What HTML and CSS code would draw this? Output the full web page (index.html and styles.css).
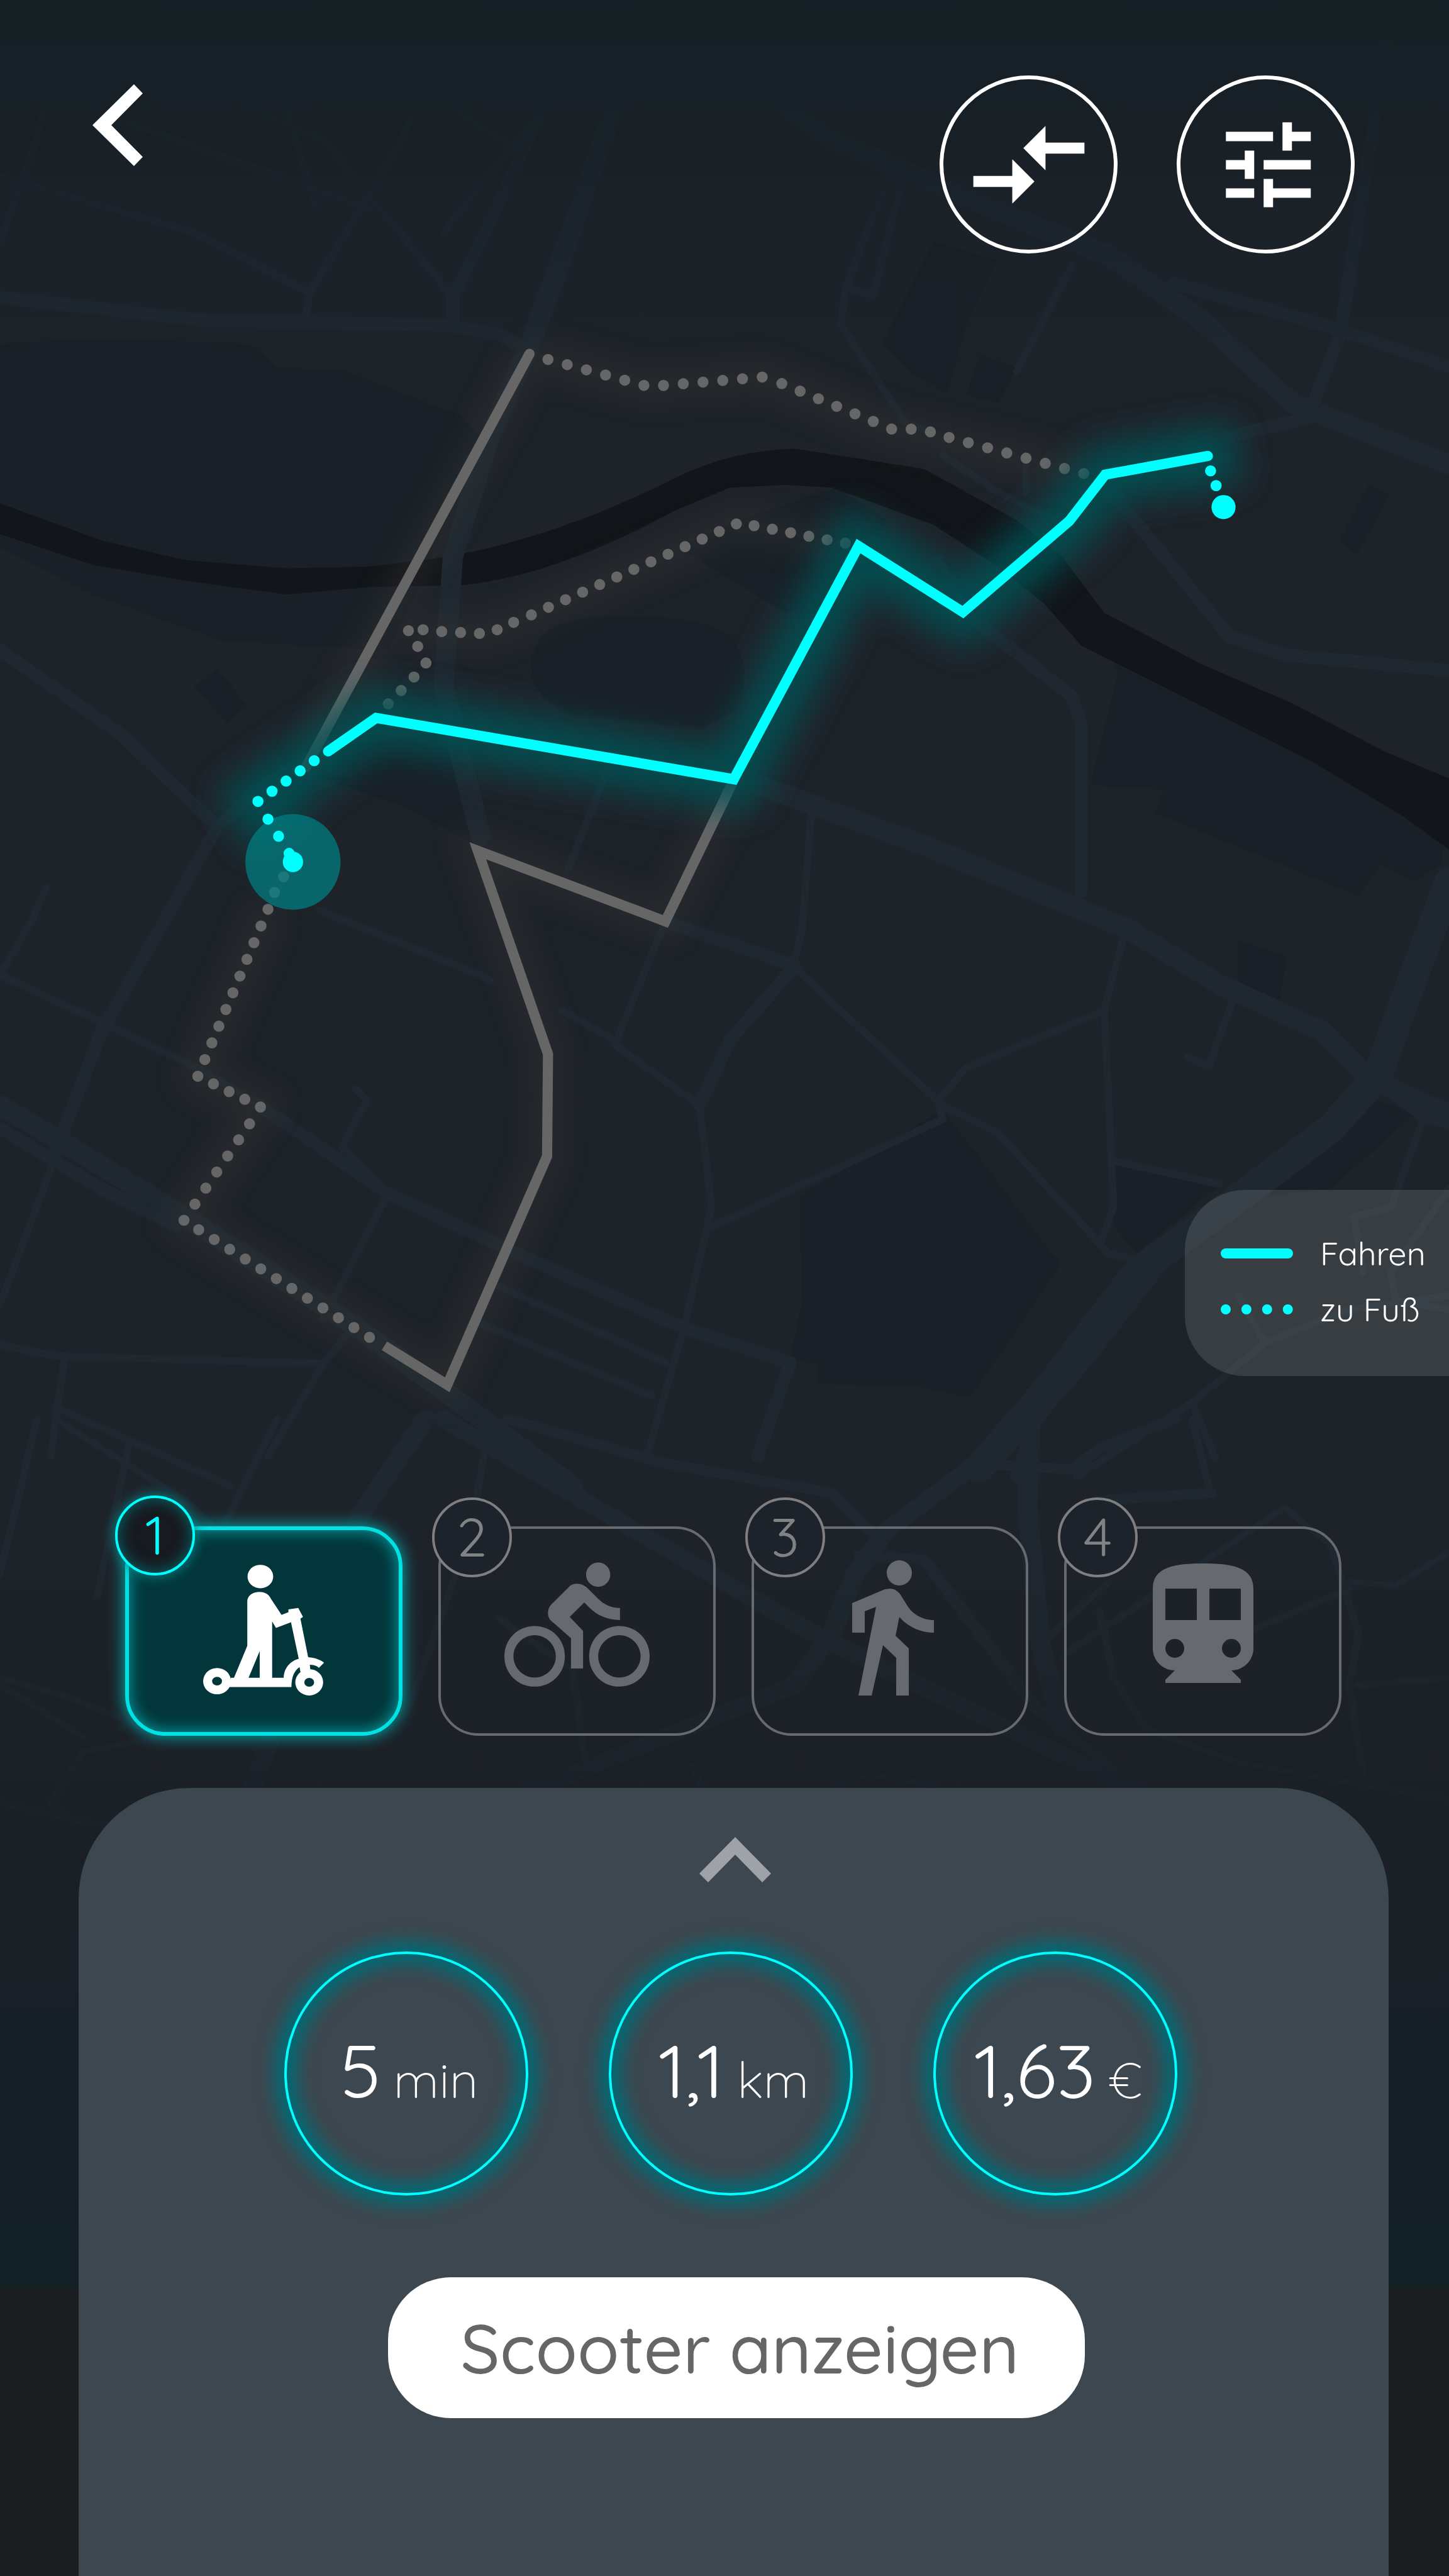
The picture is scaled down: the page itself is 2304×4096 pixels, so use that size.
FILE: index.html
```html
<!DOCTYPE html>
<html lang="de">
<head>
<meta charset="utf-8">
<meta name="viewport" content="width=device-width, initial-scale=1">
<title>Route</title>
<link rel="stylesheet" href="styles.css">
</head>
<body>
<div class="app">
  <svg class="map" viewBox="0 0 2304 4096" preserveAspectRatio="xMidYMin slice" aria-hidden="true">
    <defs>
      <linearGradient id="shade" x1="0" y1="0" x2="0" y2="1">
        <stop offset="0" stop-color="#142025"/>
        <stop offset="0.03" stop-color="#151f25" stop-opacity="0.85"/>
        <stop offset="0.15" stop-color="#171f25" stop-opacity="0.1"/>
        <stop offset="0.2" stop-color="#171f25" stop-opacity="0"/>
        <stop offset="0.66" stop-color="#1a1f23" stop-opacity="0"/>
        <stop offset="0.78" stop-color="#1a1e24" stop-opacity="0.6"/>
        <stop offset="0.9" stop-color="#161f26" stop-opacity="0.95"/>
        <stop offset="1" stop-color="#122026"/>
      </linearGradient>
      <filter id="glow" filterUnits="userSpaceOnUse" x="100" y="300" width="1468" height="800"><feGaussianBlur stdDeviation="18"/></filter>
      <filter id="halo" filterUnits="userSpaceOnUse" x="0" y="250" width="1568" height="1400"><feGaussianBlur stdDeviation="14"/></filter>
    </defs>
    <rect width="2304" height="3636" fill="#1e232a"/>
    <g transform="scale(1.4694 1.4768)" fill="none">
      <g class="park">
        <path d="M0 370L110 365L270 370L300 395L375 400L500 448L520 470L450 640L420 700L240 690L100 640L0 590Z"/>
        <path d="M575 715C580 680 600 668 650 664C720 662 770 668 790 685C810 710 810 740 795 765L760 785L620 770C585 755 575 740 575 715Z"/>
        <path d="M735 590L800 560L905 525L960 560L900 660L850 660Z"/>
        <path d="M1195 690L1300 730L1568 860L1560 930L1530 950L1495 930L1470 965L1250 875L1260 850L1180 845L1210 725Z"/>
        <path d="M865 1288L1020 1195L1148 1362L1050 1505L990 1492L885 1490L885 1468L855 1465L868 1400Z"/>
        <path d="M1010 260L1080 280L1045 350L1025 425L985 400L955 370Z"/>
        <path d="M1205 1250L1320 1275L1230 1350L1205 1320ZM1340 1290L1480 1180L1530 1200L1440 1280Z"/>
        <path d="M210 740L235 720L268 760L245 778ZM1340 1012L1392 1030L1385 1078L1340 1070ZM1480 522L1504 532L1468 598L1450 582ZM1060 382L1100 396L1080 435L1046 425Z"/>
        <path d="M340 835L440 870L515 910L520 860L470 790L380 800Z"/>
      </g>
      <path class="water" d="M0 542L110 582L200 603L310 612L400 610L480 600Q600 580 730 515Q790 485 860 483L1000 505L1100 560L1150 600L1195 660L1300 715L1400 758L1500 810L1568 838V915L1520 880L1420 820L1280 750L1170 695L1130 650L1080 610L1010 565L900 525L850 522L790 525L730 550Q600 620 500 630L400 632L310 640L200 625L100 608L0 575Z"/>
      <g class="road road-l">
        <path d="M680 70L625 230L572 375L530 470L490 600L480 740L520 900"/>
        <path d="M0 1190L60 1225L200 1310L380 1425L484 1500L620 1600"/>
        <path d="M760 60L900 150L1050 215L1200 275L1300 345L1400 435L1568 500"/>
        <path d="M820 845L1000 910L1220 1000L1320 1060L1430 1110L1480 1160L1568 1200"/>
        <path class="road-xl" d="M1568 950L1530 1050L1490 1160L1440 1215L1340 1290L1230 1370L1130 1500L1060 1580"/>
      </g>
      <g class="road road-m">
        <path d="M0 700L130 790L235 890L190 970L110 1110L60 1240"/>
        <path d="M235 890L280 850L400 775"/>
        <path d="M0 1215L110 1280L190 1320"/>
        <path d="M0 320L220 345L480 350L540 360L572 378"/>
        <path d="M600 90L520 260L490 320V345"/>
        <path d="M280 1190L420 1285L560 1350L740 1430L855 1467L820 1568"/>
        <path d="M720 992L860 1040L790 1120L757 1190"/>
        <path d="M1250 1370L1180 1460L1120 1530L1100 1590"/>
        <path d="M1270 305L1450 355L1568 395"/>
        <path d="M1195 520L1330 685L1390 705L1568 722"/>
        <path d="M1045 660L1160 750L1170 780V960"/>
        <path d="M1330 470L1415 450L1450 360L1500 50"/>
      </g>
      <g class="road road-s">
        <path d="M60 60L40 150L0 260M0 190L210 250L335 315L330 345M160 70L350 150L490 320M50 100L400 225M300 80L340 220M410 70L560 160M470 70L430 160L335 315M600 100L480 250"/>
        <path d="M965 190L945 230L915 310L945 318L975 200M915 310L910 350L980 455L1010 466M1160 285L1100 400M1450 355L1425 435L1400 455M900 60L920 120"/>
        <path d="M0 1050L120 1105L214 1150L282 1190M345 980L520 1050L530 1056M50 955L35 990L0 1050M385 1172L397 1185L370 1235L420 1285L350 1420"/>
        <path d="M655 835L615 935M720 992L665 1125L757 1190L770 1300L740 1430L700 1568M608 1088L665 1120M878 875L868 1000L858 1040L1020 1190L1080 1220L1200 1350L1225 1355"/>
        <path d="M768 1322L1020 1205L1015 1185L1045 1150L1195 1088L1215 1010M1195 1088L1205 1300L1190 1340M1205 1250L1320 1275M1335 1075L1308 1148L1285 1138"/>
        <path d="M540 1385L720 1467M520 1425L705 1503M1480 1160L1540 1205L1568 1212M1540 1205L1505 1300L1465 1310L1475 1370M1568 1280L1505 1370L1510 1400L1568 1410M1340 1395L1368 1445M1290 1510L1370 1445L1460 1410L1568 1395M1290 1510L1165 1590M1290 1510L1315 1570"/>
        <path d="M60 1245L0 1405M0 1448L60 1460L350 1468L385 1425M70 1460L55 1568M60 1515L250 1600M350 1468L290 1568M1020 490L1080 530L1160 570M1015 600L1045 655M1110 500V530"/>
      </g>
      <!-- southern half of the city, beneath the mode cards -->
      <g transform="translate(0 1528) scale(1 0.795)">
        <g class="road road-l">
          <path d="M480 0L700 160L880 290L1010 370L1240 510"/>
          <path d="M460 0L390 130L330 300L270 510"/>
          <path d="M1115 0L1112 120L1125 300L1150 420"/>
          <path d="M1100 20L960 150L925 210L900 290L860 360L700 440L560 510"/>
        </g>
        <g class="road road-m">
          <path d="M930 185L1000 190L1120 390L1230 500M550 0L720 60L900 100L940 150"/>
          <path d="M1050 60L1160 68L1190 40L1270 0M1190 110L1310 100"/>
        </g>
        <g class="road road-s">
          <path d="M140 30L105 240M40 0L0 210M60 0L200 110L380 310M0 350L70 375L180 430L90 450L55 520L80 545M0 360L90 430"/>
          <path d="M300 0L200 250L130 420M530 0L510 150L440 400M540 270L620 340L635 480"/>
          <path d="M1150 320L1210 270L1390 120L1440 170L1470 290L1460 360L1475 480M1200 220L1130 300M1290 0L1310 100M1460 220L1510 225L1568 180M1270 330L1460 230M1190 260L1205 350L1240 420L1340 465L1568 515M900 500L940 480L1010 495M750 470L760 500M1470 360L1568 350"/>
          <path d="M0 520L115 552"/>
        </g>
      </g>
    </g>
    <rect width="2304" height="3636" fill="url(#shade)"/>
    <g transform="scale(1.4694 1.4768)" fill="none">
      <g class="halo" filter="url(#halo)">
        <path d="M573 381L331 826M573 381L697 415L825 406L965 462L1173 510M915 585L797 564L538 678L442 679M794 840L720 992L517 916L593 1135L592 1245L484 1491L199 1314L282 1192L214 1159L290 979"/>
      </g>
      <g class="route alt">
        <path d="M573 381L331 826" stroke-linecap="round"/>
        <path d="M794 840L720 992L517 916L593 1135L592 1245L484 1491L416 1449"/>
      </g>
      <g class="walk alt">
        <path pathLength="5.01" d="M593 387L697 415"/>
        <path pathLength="5.01" d="M718 415L825 406"/>
        <path pathLength="6.01" d="M846 413L965 462"/>
        <path pathLength="1.01" d="M986 462L1007 465"/>
        <path pathLength="7.01" d="M1027 471L1173 510"/>
        <path pathLength="1.01" d="M442 679L458 678"/>
        <path pathLength="2.01" d="M478 680L519 682"/>
        <path pathLength="1.01" d="M538 678L556 670"/>
        <path pathLength="12.01" d="M575 662L797 564"/>
        <path pathLength="5.01" d="M816 566L915 585"/>
        <path pathLength="1.01" d="M452 696L461 714"/>
        <path pathLength="2.01" d="M448 729L420 758"/>
        <path pathLength="1.01" d="M307 944L297 961"/>
        <path pathLength="10.01" d="M290 979L214 1159"/>
        <path pathLength="3.01" d="M231 1167L282 1192"/>
        <path pathLength="6.01" d="M270 1210L199 1314"/>
        <path pathLength="11.01" d="M215 1324L400 1440"/>
      </g>
      <g class="glow" filter="url(#glow)">
        <path d="M301 900L279 863L355 809L407 773L794 839L929 588L1042 659L1157 561L1196 511L1307 491L1316 523"/>
      </g>
      <path class="route main" d="M355 809L407 773L794 839L929 588L1042 659L1157 561L1196 511L1307 491"/>
      <circle cx="317" cy="928" r="51.500" fill="#007f82" fill-opacity="0.72"/>
      <g class="walk main">
        <path pathLength="4.01" d="M340 819L279 863"/>
        <path pathLength="2.01" d="M290 882L313 919"/>
        <path pathLength="1.01" d="M1310 507L1316 523"/>
      </g>
      <circle cx="1324" cy="546" r="13" fill="#00ffff"/>
      <circle cx="317" cy="928" r="11" fill="#00ffff"/>
    </g>
  </svg>

  <header class="topbar">
    <button class="back" aria-label="Zurück">
      <svg viewBox="0 0 80 130"><path d="M80 14.500L66 0L0 65L66 130L80 115.500L30 65Z"/></svg>
    </button>
    <div class="tools">
      <button class="round" aria-label="Start und Ziel tauschen">
        <svg class="icon-swap" viewBox="0 0 24 24"><path d="M9.010 14H2v2h7.010v3L13 15l-3.990-4v3zm5.980-1v-3H22V8h-7.010V5L11 9l3.990 4z"/></svg>
      </button>
      <button class="round" aria-label="Filter">
        <svg class="icon-tune" viewBox="-.5 0 24 24"><path d="M3 17v2h6v-2H3zM3 5v2h10V5H3zm10 16v-2h8v-2h-8v-2h-2v6h2zM7 9v2H3v2h4v2h2V9H7zm14 4v-2H11v2h10zm-6-4h2V7h4V5h-4V3h-2v6z"/></svg>
      </button>
    </div>
  </header>

  <ul class="legend">
    <li><svg viewBox="0 0 115 16"><path d="M8 8H107"/></svg>Fahren</li>
    <li><svg viewBox="0 0 115 16"><path d="M8 8H107" pathLength="3.01" stroke-dasharray="0 1"/></svg>zu Fuß</li>
  </ul>

  <nav class="modes" aria-label="Verkehrsmittel">
    <button class="mode active" aria-pressed="true" aria-label="1 Scooter">
      <span class="badge">1</span>
      <svg class="icon-scooter" viewBox="0 0 192 208"><g transform="scale(.6815 .303) translate(-301 -477)" fill-rule="evenodd">
        <ellipse cx="434.500" cy="539" rx="30" ry="61.500"/>
        <path d="M404 670C404 638 418 620 432 620C446 620 455 635 459 655L484 740L500 726V711L523 704L534 751L528 760L546 962C562 965 574 975 583 991L571 1018C566 1008 560 1003 550 1002L551 1028L528 1040L526 1014C514 1032 507 1065 507 1119H362L366 1070H373L404 903ZM462 775L471 809L506 779L524 970C500 985 489 1030 489 1070H462ZM433 930L407 1070H433Z"/>
        <path d="M301 1088A32.500 69 0 1 0 366 1088A32.500 69 0 1 0 301 1088ZM322 1088A11.500 23 0 1 1 345 1088A11.500 23 0 1 1 322 1088Z"/>
        <path d="M516 1094A32.500 69 0 1 0 581 1094A32.500 69 0 1 0 516 1094ZM537 1094A11.500 23 0 1 1 560 1094A11.500 23 0 1 1 537 1094Z"/>
      </g></svg>
    </button>
    <button class="mode" aria-pressed="false" aria-label="2 Fahrrad">
      <span class="badge">2</span>
      <svg class="icon-bike" viewBox="0 0 24 24"><path d="M15.500 5.500c1.100 0 2-.9 2-2s-.9-2-2-2-2 .9-2 2 .9 2 2 2zM5 12c-2.800 0-5 2.200-5 5s2.200 5 5 5 5-2.200 5-5-2.200-5-5-5zm0 8.500c-1.900 0-3.500-1.600-3.500-3.500s1.600-3.500 3.500-3.500 3.500 1.600 3.500 3.500-1.600 3.500-3.500 3.500zm5.800-10l2.400-2.400.8.8c1.300 1.300 3 2.100 5.100 2.100V9c-1.500 0-2.700-.6-3.600-1.500l-1.900-1.900c-.5-.4-1-.6-1.600-.6s-1.100.2-1.400.6L7.800 8.400c-.4.4-.6.9-.6 1.400 0 .6.200 1.100.6 1.400L11 14v5h2v-6.200l-2.200-2.300zM19 12c-2.800 0-5 2.200-5 5s2.200 5 5 5 5-2.200 5-5-2.200-5-5-5zm0 8.500c-1.900 0-3.500-1.600-3.500-3.500s1.600-3.500 3.500-3.500 3.500 1.600 3.500 3.500-1.600 3.500-3.500 3.500z"/></svg>
    </button>
    <button class="mode" aria-pressed="false" aria-label="3 zu Fuß">
      <span class="badge">3</span>
      <svg class="icon-walk" viewBox="0 0 24 24"><path d="M13.500 5.500c1.100 0 2-.9 2-2s-.9-2-2-2-2 .9-2 2 .9 2 2 2zM9.800 8.900L7 23h2.100l1.800-8 2.100 2v6h2v-7.500l-2.100-2 .6-3C14.800 12 16.800 13 19 13v-2c-1.900 0-3.500-1-4.300-2.400l-1-1.600c-.4-.6-1-1-1.700-1-.3 0-.5.1-.8.1L6 8.300V13h2V9.600l1.800-.7z"/></svg>
    </button>
    <button class="mode" aria-pressed="false" aria-label="4 Bahn">
      <span class="badge">4</span>
      <svg class="icon-train" viewBox="0 0 24 24"><path fill-rule="evenodd" d="M12 2c-4.420 0-8 .5-8 4v9.500C4 17.430 5.570 19 7.500 19L6 20.500v.5h12v-.5L16.500 19c1.930 0 3.500-1.570 3.500-3.500V6c0-3.500-3.580-4-8-4zM7.500 17a1.500 1.500 0 1 1 0-3 1.500 1.500 0 0 1 0 3zM16.500 17a1.500 1.500 0 1 1 0-3 1.500 1.500 0 0 1 0 3zM6 6h5v5H6zM13 6h5v5h-5z"/></svg>
    </button>
  </nav>

  <section class="sheet">
    <button class="expand" aria-label="Mehr anzeigen">
      <svg viewBox="0 0 114 72"><path d="M0 58L57 0L114 58L100 72L57 28L14 72Z"/></svg>
    </button>
    <div class="stats">
      <p class="stat"><span class="value">5</span><span class="unit">min</span></p>
      <p class="stat"><span class="value">1,1</span><span class="unit">km</span></p>
      <p class="stat"><span class="value">1,63</span><span class="unit">€</span></p>
    </div>
    <button class="cta">Scooter anzeigen</button>
  </section>
</div>
</body>
</html>
```
FILE: styles.css
```css
:root {
  --cyan: #00ffff;
  --grey: #666;
  --font: Quicksand, Inter, "Open Sans", sans-serif;
}

* { box-sizing: border-box; }

body {
  margin: 0;
  background: #1a1e20;
  color: #fff;
  font-family: var(--font);
  font-weight: 400;
}

button {
  margin: 0;
  padding: 0;
  border: 0;
  background: none;
  color: inherit;
  font: inherit;
}

svg { display: block; fill: currentColor; }

.app {
  position: relative;
  display: flex;
  flex-direction: column;
  min-height: 100vh;
  overflow: hidden;
}

/* map canvas behind the interface */
.map {
  position: absolute;
  inset: 0;
  width: 100%;
  height: 100%;
  z-index: -1;
}

.park { fill: #192027; }
.water { fill: #121519; }
.road { stroke: #1f2831; stroke-linejoin: round; stroke-linecap: round; }
.road-l { stroke-width: 22; }
.road-xl { stroke-width: 32; }
.road-m { stroke-width: 14; }
.road-s { stroke-width: 8; }
.route { stroke-width: 11; }
.route.main { stroke-linecap: round; }
.walk { stroke-width: 12; stroke-linecap: round; stroke-dasharray: 0 1; }
.alt { stroke: var(--grey); }
.main { stroke: var(--cyan); }
.halo { stroke: #3c3c38; stroke-width: 36; opacity: .28; }
.glow { stroke: #005256; stroke-width: 62; opacity: .85; }

.topbar {
  display: flex;
  justify-content: space-between;
  align-items: flex-start;
  padding: 120px 150px 0 147px;
}

.back { padding-top: 14px; }
.back svg { width: 80px; height: 130px; }
.tools { display: flex; gap: 94px; }

.round {
  display: grid;
  place-items: center;
  width: 283px;
  height: 283px;
  border: 6px solid #fff;
  border-radius: 50%;
}

.icon-swap { width: 212px; }
.icon-tune { width: 180px; }

.legend {
  align-self: flex-end;
  display: flex;
  flex-direction: column;
  gap: 24px;
  width: 420px;
  margin: auto 0 239px;
  padding: 68px 0 74px 57px;
  border-radius: 96px 0 0 96px;
  background: rgba(250, 255, 240, .12);
  list-style: none;
  font-size: 52px;
  line-height: 65px;
}

.legend li { display: flex; align-items: center; gap: 43px; white-space: nowrap; }
.legend svg { width: 115px; height: 16px; fill: none; stroke: var(--cyan); stroke-width: 16; stroke-linecap: round; }

.modes {
  display: grid;
  grid-template-columns: repeat(4, 1fr);
  gap: 57px;
  padding: 0 171px 0 199px;
}

.mode {
  position: relative;
  display: grid;
  place-items: center;
  height: 333px;
  padding-bottom: 16px;
  border: 4px solid #676b6f;
  border-radius: 64px;
  color: #666a6e;
}

.badge {
  position: absolute;
  left: -14px;
  top: -50px;
  width: 127px;
  height: 127px;
  border: 4px solid #807f7f;
  border-radius: 50%;
  background: #1d232a;
  color: #808284;
  font-size: 86px;
  line-height: 117px;
  text-align: center;
}

.mode.active {
  padding-bottom: 4px;
  border: 6px solid #00e1e4;
  background: rgba(0, 56, 60, .93);
  color: #fff;
  box-shadow: 0 0 24px 2px #00a5a8, inset 0 0 24px 2px #009a9d;
}

.active .badge {
  left: -22px;
  top: -55px;
  border-color: var(--cyan);
  background: #171a20;
  color: var(--cyan);
  box-shadow: 0 0 20px 1px #008a8c, inset 0 0 24px #006c6e;
}

.icon-scooter { width: 192px; height: 208px; }
.icon-bike { width: 231px; }
.icon-walk, .icon-train { width: 240px; }

.sheet {
  display: flex;
  flex-direction: column;
  align-items: center;
  min-height: 1253px;
  margin: 83px 96px 0 125px;
  padding-top: 78px;
  border-radius: 176px 176px 0 0;
  background: #3d474f;
}

.expand { padding-left: 4px; color: #9fa3a8; }
.expand svg { width: 114px; height: 72px; }

.stats {
  display: flex;
  gap: 128px;
  margin: 110px 10px 0 0;
}

.stat {
  display: flex;
  justify-content: center;
  align-items: baseline;
  gap: 20px;
  width: 388px;
  height: 388px;
  margin: 0;
  padding-left: 10px;
  border: 4px solid var(--cyan);
  border-radius: 50%;
  box-shadow: 0 0 28px 16px #006b75, inset 0 0 28px 16px #006b75;
  line-height: 370px;
  white-space: nowrap;
}

.value { font-size: 119px; }
.unit { font-size: 80px; font-weight: 300; }

.cta {
  width: 1108px;
  height: 224px;
  margin: 130px 0 0 8px;
  padding-left: 12px;
  border-radius: 100px;
  background: #fff;
  color: var(--grey);
  font-size: 109px;
  font-weight: 500;
}
```
